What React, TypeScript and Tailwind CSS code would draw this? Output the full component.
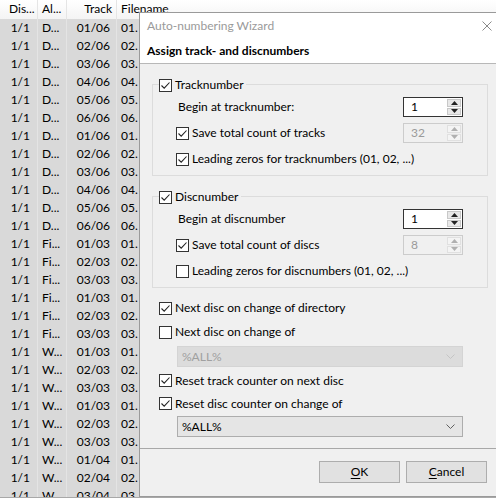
import React from 'react'

type Row = { album: string; track: string }

const rows: Row[] = [
  ...['01/06', '02/06', '03/06', '04/06', '05/06', '06/06', '01/06', '02/06', '03/06', '04/06', '05/06', '06/06'].map((track) => ({ album: 'D...', track })),
  ...['01/03', '02/03', '03/03', '01/03', '02/03', '03/03'].map((track) => ({ album: 'Fi...', track })),
  ...['01/03', '02/03', '03/03', '01/03', '02/03', '03/03', '01/04', '02/04', '03/04'].map((track) => ({ album: 'W...', track })),
]

function CheckBox({ checked }: { checked: boolean }) {
  return (
    <span className="flex h-[13px] w-[13px] shrink-0 items-center justify-center border border-[#333333] bg-white">
      {checked && (
        <svg width="11" height="11" viewBox="0 0 11 11">
          <path d="M1.5 5.5 L4.2 8.2 L9.5 2.5" fill="none" stroke="#222222" strokeWidth="1.1" />
        </svg>
      )}
    </span>
  )
}

function CheckRow({ checked, label, className = '' }: { checked: boolean; label: string; className?: string }) {
  return (
    <div className={`flex items-center gap-[3px] ${className}`}>
      <CheckBox checked={checked} />
      <span>{label}</span>
    </div>
  )
}

function Arrow({ up, color }: { up: boolean; color: string }) {
  return (
    <svg width="7" height="4" viewBox="0 0 7 4">
      <path d={up ? 'M0 4 L3.5 0 L7 4 Z' : 'M0 0 L3.5 4 L7 0 Z'} fill={color} />
    </svg>
  )
}

function SpinBox({ value, disabled = false }: { value: string; disabled?: boolean }) {
  return (
    <div
      className={`flex h-[20px] w-[60px] border ${disabled ? 'border-[#cccccc] bg-[#f0f0f0] text-[#9a9a9a]' : 'border-[#333333] bg-white text-black'}`}
    >
      <div className="flex-1 pl-[7px] leading-[18px]">{value}</div>
      <div className="flex w-[16px] flex-col gap-[1px] p-[1px]">
        <div
          className={`flex flex-1 items-center justify-center border ${disabled ? 'border-[#e0e0e0] bg-[#f4f4f4]' : 'border-[#c8c8c8] bg-[#e8e8e8]'}`}
        >
          <Arrow up color={disabled ? '#b0b0b0' : '#222222'} />
        </div>
        <div
          className={`flex flex-1 items-center justify-center border ${disabled ? 'border-[#e0e0e0] bg-[#f4f4f4]' : 'border-[#c8c8c8] bg-[#e8e8e8]'}`}
        >
          <Arrow up={false} color={disabled ? '#b0b0b0' : '#222222'} />
        </div>
      </div>
    </div>
  )
}

function ComboBox({ disabled = false }: { disabled?: boolean }) {
  return (
    <div
      className={`ml-[37px] flex h-[21px] w-[286px] items-center justify-between border pl-[4px] pr-[7px] ${disabled ? 'border-[#d4d4d4] bg-[#dcdcdc] text-[#a0a0a0]' : 'border-[#adadad] bg-[#e5e5e5] text-black'}`}
    >
      <span>%ALL%</span>
      <svg width="9" height="5" viewBox="0 0 9 5">
        <path d="M0.5 0.5 L4.5 4.5 L8.5 0.5" fill="none" stroke={disabled ? '#c4c4c4' : '#606060'} strokeWidth="1" />
      </svg>
    </div>
  )
}

function Group({ label, children, className = '' }: { label: string; children: React.ReactNode; className?: string }) {
  return (
    <div className={`relative w-[336px] border border-[#dcdcdc] pb-[4px] pl-[23px] pr-[24px] pt-[10px] ${className}`}>
      <div className="absolute -top-[9px] left-[6px] bg-[#f0f0f0] pr-[2px]">
        <CheckRow checked label={label} />
      </div>
      <div className="flex flex-col gap-[2px]">{children}</div>
    </div>
  )
}

function FieldRow({ children, spin }: { children: React.ReactNode; spin: React.ReactNode }) {
  return (
    <div className="flex h-[24px] items-center justify-between">
      {children}
      {spin}
    </div>
  )
}

export default function App() {
  return (
    <div
      className="relative h-[500px] w-[496px] overflow-hidden bg-white text-[12px] text-black"
      style={{ fontFamily: 'Lato, "Liberation Sans", sans-serif' }}
    >
      {/* Track list behind the dialog */}
      <div className="flex h-[498px] flex-col border-b border-[#a8a8a8]">
        <div className="flex h-[19px] shrink-0 bg-gradient-to-b from-white to-[#f4f4f4] leading-[17px]">
          <div className="w-[38px] border-r border-[#e5e5e5] pl-[9px]">Dis...</div>
          <div className="w-[29px] border-r border-[#e5e5e5] pl-[4px]">Al...</div>
          <div className="w-[50px] border-r border-[#e5e5e5] pr-[4px] text-right">Track</div>
          <div className="flex-1 pl-[4px]">Filename</div>
        </div>
        <div className="flex flex-col overflow-hidden">
          {rows.map((row, i) => (
            <div key={i} className="flex h-[18px] shrink-0 bg-[#d9d9d9] leading-[18px]">
              <div className="w-[38px] border-r border-[#e4e4e4] pr-[7px] text-right">1/1</div>
              <div className="w-[29px] border-r border-[#e4e4e4] pl-[4px]">{row.album}</div>
              <div className="w-[50px] border-r border-[#e4e4e4] pr-[6px] text-right">{row.track}</div>
              <div className="flex-1 pl-[4px]">{row.track.slice(0, 2)}.</div>
            </div>
          ))}
        </div>
      </div>

      {/* Auto-numbering dialog */}
      <div className="absolute left-[139px] top-[12px] flex w-[360px] flex-col border border-[#9a9a9a] bg-[#f0f0f0]">
        <div className="bg-white">
          <div className="flex h-[25px] items-center justify-between pl-[7px] pr-[6px] text-[#9a9a9a]">
            <span>Auto-numbering Wizard</span>
            <svg width="10" height="10" viewBox="0 0 10 10">
              <path d="M0.5 0.5 L9.5 9.5 M9.5 0.5 L0.5 9.5" stroke="#8a8a8a" strokeWidth="1" />
            </svg>
          </div>
          <div className="flex h-[25px] items-center pl-[7px] font-bold">Assign track- and discnumbers</div>
        </div>
        <div className="h-[1px] bg-[#b8b8b8]" />

        <div className="flex flex-col pl-[12px]">
          <Group label="Tracknumber" className="mt-[20px]">
            <FieldRow spin={<SpinBox value="1" />}>
              <span className="ml-[2px]">Begin at tracknumber:</span>
            </FieldRow>
            <FieldRow spin={<SpinBox value="32" disabled />}>
              <CheckRow checked label="Save total count of tracks" />
            </FieldRow>
            <FieldRow spin={null}>
              <CheckRow checked label="Leading zeros for tracknumbers (01, 02, ...)" />
            </FieldRow>
          </Group>

          <Group label="Discnumber" className="mt-[20px]">
            <FieldRow spin={<SpinBox value="1" />}>
              <span className="ml-[2px]">Begin at discnumber</span>
            </FieldRow>
            <FieldRow spin={<SpinBox value="8" disabled />}>
              <CheckRow checked label="Save total count of discs" />
            </FieldRow>
            <FieldRow spin={null}>
              <CheckRow checked={false} label="Leading zeros for discnumbers (01, 02, ...)" />
            </FieldRow>
          </Group>

          <CheckRow checked label="Next disc on change of directory" className="ml-[7px] mt-[8px] h-[24px]" />
          <CheckRow checked={false} label="Next disc on change of" className="ml-[7px] h-[24px]" />
          <div className="-ml-[12px] mt-[2px]">
            <ComboBox disabled />
          </div>
          <CheckRow checked label="Reset track counter on next disc" className="ml-[7px] mt-[2px] h-[23px]" />
          <CheckRow checked label="Reset disc counter on change of" className="ml-[7px] h-[23px]" />
          <div className="-ml-[12px] mt-[1px]">
            <ComboBox />
          </div>
        </div>

        <div className="mt-[11px] h-[1px] bg-[#a8a8a8]" />
        <div className="flex h-[47px] justify-end gap-[6px] pr-[11px] pt-[12px]">
          <button className="h-[22px] w-[81px] border border-[#adadad] bg-[#e1e1e1]">
            <span className="underline underline-offset-2">O</span>K
          </button>
          <button className="h-[22px] w-[81px] border border-[#adadad] bg-[#e1e1e1]">
            <span className="underline underline-offset-2">C</span>ancel
          </button>
        </div>
      </div>
    </div>
  )
}
